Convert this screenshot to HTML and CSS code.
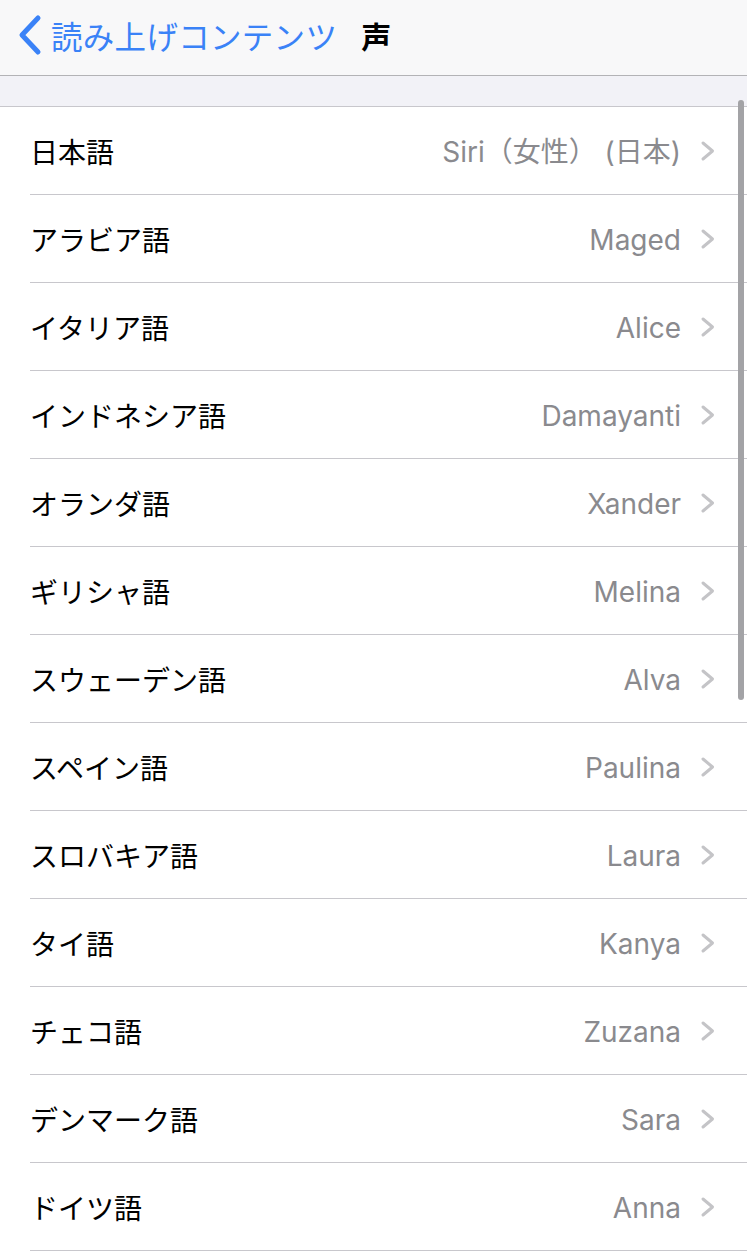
FILE: index.html
```html
<!DOCTYPE html>
<html lang="ja">
<head>
<meta charset="utf-8">
<title>声</title>
<link rel="stylesheet" href="styles.css">
</head>
<body>
<div class="screen">
  <header class="navbar">
    <a class="back">
      <svg class="back-icon" width="26" height="42" viewBox="0 0 26 42"><path d="M21 4 L5 21 L21 38" fill="none" stroke="#3a82f7" stroke-width="5" stroke-linecap="round" stroke-linejoin="round"/></svg>
      <span class="back-label">読み上げコンテンツ</span>
    </a>
    <span class="title">声</span>
  </header>
  <div class="band"></div>
  <ul class="list">
    <li class="row"><span class="label">日本語</span><span class="value">Siri（女性） (日本)</span><svg class="chev" width="16" height="24" viewBox="0 0 16 24"><path d="M3 4 L12.5 12 L3 20" fill="none" stroke="#c4c4c7" stroke-width="3" stroke-linecap="round" stroke-linejoin="round"/></svg></li>
    <li class="row"><span class="label">アラビア語</span><span class="value">Maged</span><svg class="chev" width="16" height="24" viewBox="0 0 16 24"><path d="M3 4 L12.5 12 L3 20" fill="none" stroke="#c4c4c7" stroke-width="3" stroke-linecap="round" stroke-linejoin="round"/></svg></li>
    <li class="row"><span class="label">イタリア語</span><span class="value">Alice</span><svg class="chev" width="16" height="24" viewBox="0 0 16 24"><path d="M3 4 L12.5 12 L3 20" fill="none" stroke="#c4c4c7" stroke-width="3" stroke-linecap="round" stroke-linejoin="round"/></svg></li>
    <li class="row"><span class="label">インドネシア語</span><span class="value">Damayanti</span><svg class="chev" width="16" height="24" viewBox="0 0 16 24"><path d="M3 4 L12.5 12 L3 20" fill="none" stroke="#c4c4c7" stroke-width="3" stroke-linecap="round" stroke-linejoin="round"/></svg></li>
    <li class="row"><span class="label">オランダ語</span><span class="value">Xander</span><svg class="chev" width="16" height="24" viewBox="0 0 16 24"><path d="M3 4 L12.5 12 L3 20" fill="none" stroke="#c4c4c7" stroke-width="3" stroke-linecap="round" stroke-linejoin="round"/></svg></li>
    <li class="row"><span class="label">ギリシャ語</span><span class="value">Melina</span><svg class="chev" width="16" height="24" viewBox="0 0 16 24"><path d="M3 4 L12.5 12 L3 20" fill="none" stroke="#c4c4c7" stroke-width="3" stroke-linecap="round" stroke-linejoin="round"/></svg></li>
    <li class="row"><span class="label">スウェーデン語</span><span class="value">Alva</span><svg class="chev" width="16" height="24" viewBox="0 0 16 24"><path d="M3 4 L12.5 12 L3 20" fill="none" stroke="#c4c4c7" stroke-width="3" stroke-linecap="round" stroke-linejoin="round"/></svg></li>
    <li class="row"><span class="label">スペイン語</span><span class="value">Paulina</span><svg class="chev" width="16" height="24" viewBox="0 0 16 24"><path d="M3 4 L12.5 12 L3 20" fill="none" stroke="#c4c4c7" stroke-width="3" stroke-linecap="round" stroke-linejoin="round"/></svg></li>
    <li class="row"><span class="label">スロバキア語</span><span class="value">Laura</span><svg class="chev" width="16" height="24" viewBox="0 0 16 24"><path d="M3 4 L12.5 12 L3 20" fill="none" stroke="#c4c4c7" stroke-width="3" stroke-linecap="round" stroke-linejoin="round"/></svg></li>
    <li class="row"><span class="label">タイ語</span><span class="value">Kanya</span><svg class="chev" width="16" height="24" viewBox="0 0 16 24"><path d="M3 4 L12.5 12 L3 20" fill="none" stroke="#c4c4c7" stroke-width="3" stroke-linecap="round" stroke-linejoin="round"/></svg></li>
    <li class="row"><span class="label">チェコ語</span><span class="value">Zuzana</span><svg class="chev" width="16" height="24" viewBox="0 0 16 24"><path d="M3 4 L12.5 12 L3 20" fill="none" stroke="#c4c4c7" stroke-width="3" stroke-linecap="round" stroke-linejoin="round"/></svg></li>
    <li class="row"><span class="label">デンマーク語</span><span class="value">Sara</span><svg class="chev" width="16" height="24" viewBox="0 0 16 24"><path d="M3 4 L12.5 12 L3 20" fill="none" stroke="#c4c4c7" stroke-width="3" stroke-linecap="round" stroke-linejoin="round"/></svg></li>
    <li class="row"><span class="label">ドイツ語</span><span class="value">Anna</span><svg class="chev" width="16" height="24" viewBox="0 0 16 24"><path d="M3 4 L12.5 12 L3 20" fill="none" stroke="#c4c4c7" stroke-width="3" stroke-linecap="round" stroke-linejoin="round"/></svg></li>
  </ul>
  <div class="scrollbar"></div>
</div>
</body>
</html>
```

FILE: styles.css
```css
* { box-sizing: border-box; }
html, body {
  margin: 0;
  padding: 0;
  background: #ffffff;
}
body {
  font-family: "Inter", "Noto Sans CJK JP", sans-serif;
  color: #000;
}
.screen {
  position: relative;
  width: 747px;
  height: 1254px;
  overflow: hidden;
}
.navbar {
  height: 76px;
  background: #f8f8f9;
  border-bottom: 1px solid #b3b3b6;
  display: flex;
  align-items: center;
  padding-left: 17px;
  padding-bottom: 6px;
}
.back {
  display: flex;
  align-items: center;
  gap: 8px;
  color: #3a82f7;
}
.back-icon { display: block; flex: none; }
.back-label {
  font-family: "Noto Sans CJK JP", sans-serif;
  font-size: 31.5px;
  line-height: 40px;
  letter-spacing: 0.3px;
}
.title {
  margin-left: 24px;
  font-family: "Noto Sans CJK JP", sans-serif;
  font-size: 30px;
  font-weight: 700;
  line-height: 40px;
}
.band {
  height: 31px;
  background: #f2f2f7;
  border-bottom: 1px solid #c8c7cc;
}
.list {
  list-style: none;
  margin: 0;
  padding: 0 0 0 30px;
}
.row {
  height: 88px;
  display: flex;
  align-items: center;
  padding: 0 31px 0 0;
  border-bottom: 1px solid #c8c7cc;
}
.label {
  flex: 1;
  font-family: "Noto Sans CJK JP", sans-serif;
  font-size: 28px;
  line-height: 36px;
}
.value {
  font-size: 28px;
  line-height: 36px;
  padding-top: 2px;
  color: #8a8a8e;
}
.chev {
  display: block;
  flex: none;
  margin-left: 19px;
}
.scrollbar {
  position: absolute;
  right: 3px;
  top: 100px;
  width: 6px;
  height: 600px;
  border-radius: 3px;
  background: #a3a3a6;
}
```
